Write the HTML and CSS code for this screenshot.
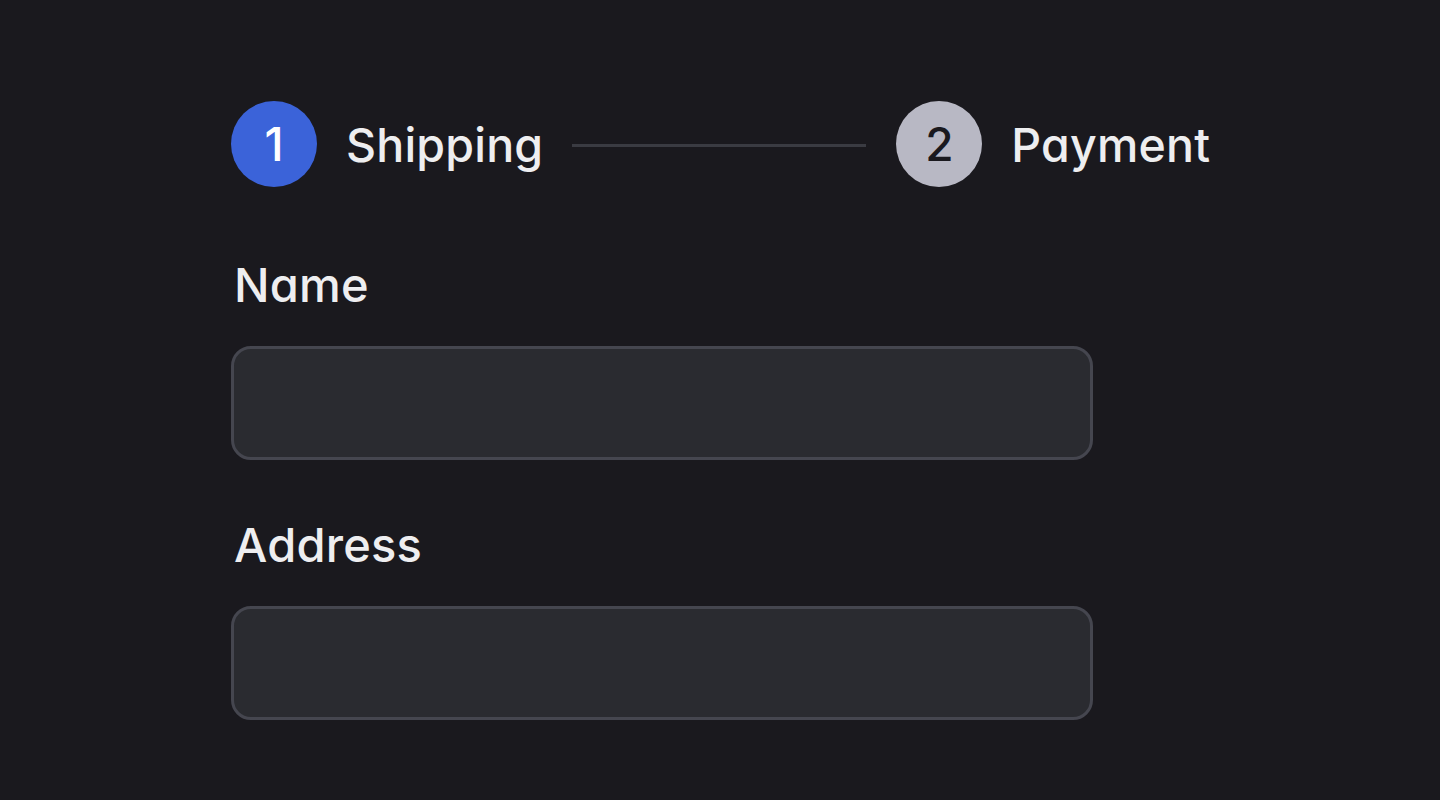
FILE: index.html
```html
<!DOCTYPE html>
<html lang="en">
<head>
<meta charset="utf-8">
<title>Checkout</title>
<link rel="stylesheet" href="styles.css">
</head>
<body>
<main class="page">
  <ol class="stepper">
    <li class="step step-active">
      <span class="step-num">1</span>
      <span class="step-label">Shipping</span>
    </li>
    <li class="step-line" aria-hidden="true"></li>
    <li class="step step-pending">
      <span class="step-num">2</span>
      <span class="step-label">Payment</span>
    </li>
  </ol>
  <form class="form">
    <div class="field">
      <label class="field-label" for="name">Name</label>
      <input class="field-input" id="name" type="text">
    </div>
    <div class="field">
      <label class="field-label" for="address">Address</label>
      <input class="field-input" id="address" type="text">
    </div>
  </form>
</main>
</body>
</html>
```
FILE: styles.css
```css
* { box-sizing: border-box; }
html, body {
  margin: 0;
  padding: 0;
  background: #1a191e;
}
body {
  font-family: Inter, "Noto Sans", sans-serif;
  font-feature-settings: "cv11" 1;
  color: #eeeef0;
}
.page {
  padding: 101px 0 0 231px;
}
.stepper {
  list-style: none;
  margin: 0;
  padding: 0;
  display: flex;
  align-items: center;
  height: 86px;
}
.step {
  display: flex;
  align-items: center;
  gap: 29px;
}
.step-num {
  width: 86px;
  height: 86px;
  border-radius: 50%;
  display: flex;
  align-items: center;
  justify-content: center;
  font-size: 46px;
  font-weight: 500;
}
.step-active .step-num {
  background: #3b63d9;
  color: #ffffff;
}
.step-pending .step-num {
  background: #b8b8c4;
  color: #1a191e;
}
.step-label {
  font-size: 46.5px;
  font-weight: 500;
  color: #eeeef0;
  letter-spacing: 0.2px;
  padding-top: 2px;
}
.step-line {
  width: 294px;
  height: 3px;
  background: #3a3b42;
  margin: 2px 30px 0 29px;
}
.form {
  margin-top: 70px;
  width: 862px;
  display: flex;
  flex-direction: column;
  gap: 57px;
}
.field {
  display: flex;
  flex-direction: column;
  gap: 33px;
}
.field-label {
  font-size: 47px;
  line-height: 56px;
  font-weight: 500;
  padding-left: 3px;
  letter-spacing: 0.2px;
  color: #eeeef0;
}
.field-input {
  height: 114px;
  width: 100%;
  border: 3px solid #45464f;
  border-radius: 20px;
  background: #2a2b30;
  color: #eeeef0;
  font: inherit;
  padding: 0 28px;
  outline: none;
}
```
